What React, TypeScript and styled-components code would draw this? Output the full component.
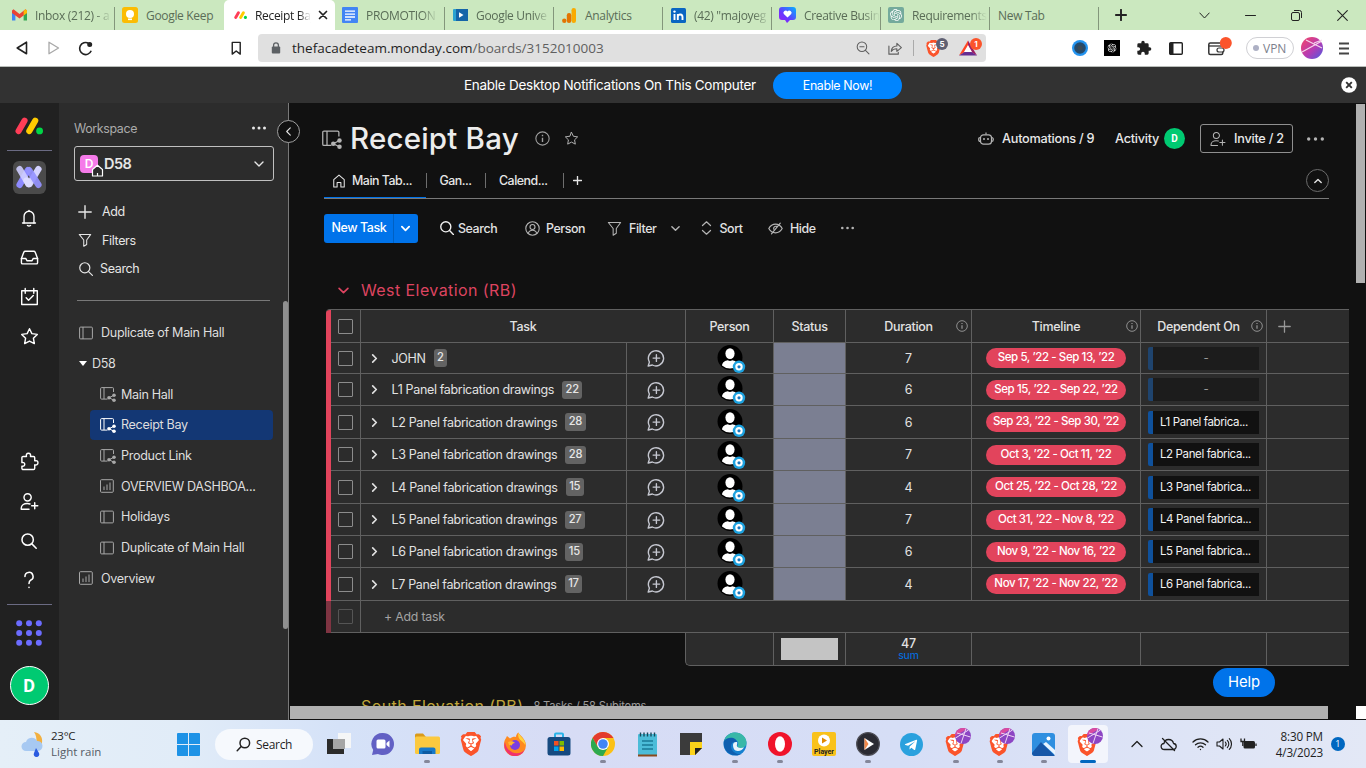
import React from "react";
import styled, { createGlobalStyle, css } from "styled-components";
import { SiBrave, SiOpenai } from "react-icons/si";
import { FaTelegramPlane } from "react-icons/fa";

const ui = '"Inter", "Liberation Sans", sans-serif';
const sys = '"Open Sans", "Noto Sans", sans-serif';

const Global = createGlobalStyle`
  *, *::before, *::after { box-sizing: border-box; }
  body { margin: 0; background: #111; overflow: hidden; }
  svg { display: block; flex: none; }
`;

const Screen = styled.div`
  width: 1366px;
  height: 768px;
  display: flex;
  flex-direction: column;
  overflow: hidden;
  font-family: ${ui};
  font-size: 12.5px;
  color: #e6e6e6;
  white-space: nowrap;
`;

/* ---------- browser chrome ---------- */

const TabStrip = styled.div`
  height: 30px;
  flex: none;
  display: flex;
  background: #cbe8bf;
  font-family: ${sys};
  font-size: 12px;
  letter-spacing: -0.32px;
  color: #5a6d57;
`;

const BrowserTab = styled.div<{ $w: number; $active?: boolean; $sep?: boolean; $pad?: number }>`
  width: ${(p) => p.$w}px;
  height: 30px;
  flex: none;
  display: flex;
  align-items: center;
  padding-left: ${(p) => p.$pad ?? 7}px;
  background: ${(p) => (p.$active ? "#fff" : "transparent")};
  border-radius: ${(p) => (p.$active ? "5px 5px 0 0" : "0")};
  color: ${(p) => (p.$active ? "#222" : "inherit")};
  ${(p) =>
    p.$sep &&
    css`
      background: linear-gradient(#83967b, #83967b) right 7px / 1px 23px no-repeat;
    `}
`;

const TabLabel = styled.span<{ $w: number; $fade?: boolean }>`
  width: ${(p) => p.$w}px;
  margin-left: 8px;
  overflow: hidden;
  ${(p) =>
    p.$fade &&
    css`
      mask-image: linear-gradient(90deg, #000 78%, transparent 100%);
    `}
`;

const WindowButtons = styled.div`
  flex: 1;
  display: flex;
  align-items: center;
  padding-left: 16px;
`;

const Toolbar = styled.div`
  height: 37px;
  flex: none;
  display: flex;
  align-items: center;
  background: #fff;
  border-bottom: 1px solid #b9bdb9;
  padding-left: 15px;
  color: #222;
`;

const NavButtons = styled.div`
  display: flex;
  width: 243px;
  align-items: center;
`;

const UrlField = styled.div`
  width: 728px;
  height: 28px;
  display: flex;
  align-items: center;
  padding: 0 4px 0 13px;
  border-radius: 4px;
  background: #e0e0e0;
  font-family: ${sys};
  font-size: 13.5px;
`;

const UrlText = styled.span`
  flex: 1;
  margin-left: 11px;
  color: #1f1f1f;
  & > span {
    color: #5f5f5f;
  }
`;

const UrlDivider = styled.i`
  width: 1px;
  height: 16px;
  margin: 0 11px 0 10px;
  background: #aaa;
`;

const BadgedIcon = styled.div<{ $w: number }>`
  position: relative;
  width: ${(p) => p.$w}px;
  height: 22px;
  display: flex;
  align-items: center;
`;

const CountBadge = styled.span<{ $c: string }>`
  position: absolute;
  top: 1px;
  right: 0;
  width: 12px;
  height: 12px;
  border-radius: 6px;
  background: ${(p) => p.$c};
  color: #fff;
  font: 700 8px/12px ${ui};
  text-align: center;
`;

const Extensions = styled.div`
  flex: 1;
  display: flex;
  align-items: center;
  padding-left: 86px;
`;

const VpnPill = styled.div`
  width: 48px;
  height: 22px;
  margin-left: 14px;
  border: 1px solid #d0d0d4;
  border-radius: 11px;
  display: flex;
  align-items: center;
  gap: 4px;
  padding-left: 6px;
  font: 12px ${sys};
  color: #7c808c;
  &::before {
    content: "";
    width: 6px;
    height: 6px;
    border-radius: 3px;
    background: #adb0c4;
  }
`;

const Banner = styled.div`
  height: 36px;
  flex: none;
  display: flex;
  align-items: center;
  background: #323232;
  color: #fff;
  padding-left: 464px;
`;

const BannerText = styled.span`
  width: 309px;
  font-size: 13.5px;
  letter-spacing: -0.27px;
`;

const BannerButton = styled.div`
  width: 129px;
  height: 27px;
  border-radius: 14px;
  background: #0085ff;
  font-size: 12.4px;
  letter-spacing: -0.35px;
  line-height: 27px;
  text-align: center;
  margin-right: 439px;
`;

/* ---------- application shell ---------- */

const AppBody = styled.div`
  height: 617px;
  flex: none;
  display: flex;
  background: #111;
`;

const Rail = styled.nav`
  width: 59px;
  flex: none;
  background: #212121;
  display: flex;
  flex-direction: column;
  align-items: center;
  color: #fff;
`;

const RailSlot = styled.div<{ $h: number; $gap?: number }>`
  height: ${(p) => p.$h}px;
  margin-top: ${(p) => p.$gap ?? 0}px;
  padding: 0 1px 1px 0;
  display: flex;
  align-items: center;
  justify-content: center;
`;

const RailRule = styled.i<{ $gap?: number }>`
  width: 45px;
  height: 1px;
  margin-top: ${(p) => p.$gap ?? 0}px;
  background: #6b6b83;
`;

const ProductTile = styled.div`
  width: 33px;
  height: 33px;
  border-radius: 6px;
  background: #4b4b4b;
  display: grid;
  place-items: center;
`;

const RailAvatar = styled.div`
  width: 39px;
  height: 39px;
  border-radius: 50%;
  border: 1px solid #fff;
  background: #00ca72;
  font: 700 18px/37px Roboto, sans-serif;
  text-align: center;
  color: #fff;
`;

const Sidebar = styled.aside`
  position: relative;
  width: 230px;
  flex: none;
  background: #2c2c2c;
  border-right: 1px solid #797979;
`;

const SidebarHead = styled.div`
  height: 43px;
  display: flex;
  align-items: center;
  justify-content: space-between;
  padding: 7px 22px 0 15px;
  color: #ababab;
  font-size: 12.4px;
  letter-spacing: -0.35px;
  & > svg {
    color: #e8e8e8;
  }
`;

const WorkspaceSelect = styled.div`
  width: 200px;
  height: 35px;
  margin-left: 15px;
  border: 1px solid #c0c0c0;
  border-radius: 3px;
  display: flex;
  align-items: center;
  padding: 0 9px 0 5px;
`;

const WorkspaceBadge = styled.div`
  position: relative;
  width: 18px;
  height: 18px;
  border-radius: 4px;
  background: #f57be9;
  color: #fff;
  font-size: 12px;
  font-weight: 600;
  line-height: 18px;
  text-align: center;
  & > svg {
    position: absolute;
    left: 11px;
    top: 9px;
  }
`;

const WorkspaceName = styled.b`
  flex: 1;
  margin-left: 6px;
  font-size: 14.5px;
  font-weight: 600;
  letter-spacing: -0.5px;
`;

const SideActions = styled.div`
  padding: 16.5px 0 0 20px;
`;

const SideAction = styled.div<{ $tx: number }>`
  height: 28.5px;
  display: flex;
  align-items: center;
  font-size: 12.5px;
  letter-spacing: -0.35px;
  & > svg {
    margin-left: -1px;
  }
  & > span {
    margin-left: ${(p) => p.$tx}px;
  }
`;

const SideRule = styled.i`
  display: block;
  width: 193px;
  height: 1px;
  margin: 17px 0 16.5px 18px;
  background: #797979;
`;

const TreeRow = styled.div<{ $level?: number; $active?: boolean }>`
  width: 183px;
  height: 30.7px;
  margin-left: ${(p) => (p.$level ? 31 : 11)}px;
  padding-left: ${(p) => (p.$level ? 10 : 9)}px;
  border-radius: 4px;
  background: ${(p) => (p.$active ? "#133774" : "transparent")};
  display: flex;
  align-items: center;
  color: #dedede;
  font-size: 12.6px;
  letter-spacing: -0.33px;
  & > svg {
    color: ${(p) => (p.$active ? "#fff" : "#a8a8a8")};
  }
`;

const TreeLabel = styled.span<{ $ml: number }>`
  margin-left: ${(p) => p.$ml}px;
`;

const SideScroll = styled.i`
  position: absolute;
  left: 224px;
  top: 198px;
  width: 5px;
  height: 328px;
  border-radius: 3px;
  background: #8f8f8f;
`;

const CollapseKnob = styled.div`
  position: absolute;
  z-index: 2;
  right: -12px;
  top: 17px;
  width: 23px;
  height: 23px;
  border-radius: 50%;
  border: 1px solid #a0a0a0;
  background: #111;
  display: grid;
  place-items: center;
`;

/* ---------- board ---------- */

const Main = styled.main`
  position: relative;
  width: 1077px;
  height: 617px;
  background: #111;
  display: flex;
  flex-direction: column;
`;

const BoardHead = styled.header`
  height: 63px;
  flex: none;
  display: flex;
  align-items: center;
  padding: 8px 0 0 33px;
  color: #b4b4b4;
`;

const BoardTitle = styled.h1`
  width: 185px;
  margin: 0 0 2px 8px;
  font-size: 29.5px;
  font-weight: 500;
  letter-spacing: 0.2px;
  color: #ececec;
`;

const HeadText = styled.span<{ $w: number; $ml?: number }>`
  width: ${(p) => p.$w}px;
  margin-left: ${(p) => p.$ml ?? 0}px;
  font-size: 12.7px;
  font-weight: 500;
  letter-spacing: -0.25px;
  color: #e8e8e8;
`;

const Dot = styled.div`
  width: 21px;
  height: 21px;
  border-radius: 50%;
  background: #00ca72;
  color: #fff;
  font: 700 10px/21px Roboto, sans-serif;
  text-align: center;
`;

const InviteButton = styled.div`
  width: 93px;
  height: 29px;
  margin: 0 14px 0 15px;
  border: 1px solid #8f8f8f;
  border-radius: 3px;
  display: flex;
  align-items: center;
  padding-left: 9px;
`;

const ViewBar = styled.div`
  width: 1005px;
  height: 33px;
  margin-left: 35px;
  flex: none;
  display: flex;
  align-items: center;
  padding-bottom: 3px;
  border-bottom: 1px solid #797979;
  position: relative;
`;

const ViewTab = styled.div<{ $w: number; $pad: number }>`
  width: ${(p) => p.$w}px;
  height: 100%;
  display: flex;
  align-items: center;
  padding-left: ${(p) => p.$pad}px;
  font-size: 12.4px;
  letter-spacing: -0.48px;
  font-weight: 500;
  background: linear-gradient(#6e6e6e, #6e6e6e) right 7px / 1px 15px no-repeat;
  & > svg {
    margin-right: 6px;
  }
`;

const ActiveLine = styled.i`
  position: absolute;
  left: 0;
  bottom: 0;
  width: 102px;
  height: 1px;
  background: #0073ea;
`;

const RoundButton = styled.div`
  width: 23px;
  height: 23px;
  border: 1px solid #6c6c6c;
  border-radius: 50%;
  display: grid;
  place-items: center;
`;

const ActionBar = styled.div`
  height: 58px;
  flex: none;
  display: flex;
  align-items: center;
  padding-left: 35px;
  color: #b4b4b4;
`;

const NewTask = styled.div`
  width: 94px;
  height: 29px;
  border-radius: 3px;
  background: #0073ea;
  color: #fff;
  display: flex;
  align-items: center;
  font-weight: 500;
  letter-spacing: -0.45px;
  & > span {
    width: 70px;
    height: 29px;
    line-height: 28px;
    padding-left: 7.5px;
    border-right: 1px solid #0060c2;
  }
  & > svg {
    margin-left: 7px;
  }
`;

const Action = styled.div<{ $ml: number; $gap: number; $w: number }>`
  width: ${(p) => p.$w}px;
  margin-left: ${(p) => p.$ml}px;
  display: flex;
  align-items: center;
  gap: ${(p) => p.$gap}px;
  & > span {
    font-size: 12.4px;
    font-weight: 500;
    letter-spacing: -0.4px;
    color: #e2e2e2;
  }
`;

const GroupHead = styled.div<{ $c: string }>`
  flex: none;
  display: flex;
  align-items: center;
  height: 30px;
  padding-left: 49px;
  color: ${(p) => p.$c};
  font-size: 16px;
  letter-spacing: 0.42px;
  & > b {
    font-weight: 400;
    margin-left: 12px;
  }
  & > small {
    margin-left: 10px;
    font-size: 11.2px;
    letter-spacing: -0.2px;
    color: #9b9b9b;
  }
`;

const line = "#606060";

const Table = styled.div`
  width: 1023px;
  flex: none;
  margin: 4px 0 0 37px;
  border-top: 1px solid ${line};
  border-top-left-radius: 4px;
  overflow: hidden;
`;

const Row = styled.div<{ $h: number; $faded?: boolean }>`
  height: ${(p) => p.$h}px;
  display: flex;
  background: #2c2c2c;
  border-bottom: 1px solid ${line};
  &::before {
    content: "";
    flex: none;
    width: 5px;
    margin-bottom: -1px;
    background: ${(p) => (p.$faded ? "#7f3442" : "#e2445c")};
  }
`;

const Cell = styled.div<{ $w: number; $last?: boolean; $fill?: string }>`
  width: ${(p) => p.$w}px;
  flex: none;
  display: flex;
  align-items: center;
  justify-content: center;
  border-right: ${(p) => (p.$last ? "0" : `1px solid ${line}`)};
  background: ${(p) => p.$fill ?? "transparent"};
  font-size: 12.5px;
  letter-spacing: -0.2px;
  color: #e2e2e2;
`;

const HeaderCell = styled(Cell)<{ $info?: number }>`
  font-weight: 500;
  letter-spacing: -0.3px;
  position: relative;
  & > svg {
    position: absolute;
    right: ${(p) => p.$info}px;
  }
`;

const Checkbox = styled.i<{ $dim?: boolean }>`
  width: 15px;
  height: 15px;
  border: 1px solid ${(p) => (p.$dim ? "#555" : "#8c8c8c")};
  border-radius: 1px;
`;

const NameCell = styled(Cell)`
  justify-content: flex-start;
  padding-left: 9px;
  letter-spacing: -0.34px;
  & > span {
    margin-left: 12.5px;
  }
`;

const SubCount = styled.b`
  margin-left: 8px;
  height: 18px;
  padding: 0 3.5px;
  border-radius: 3px;
  background: #636363;
  font-size: 11.2px;
  line-height: 16px;
  font-weight: 500;
  letter-spacing: -0.3px;
  color: #e6e6e6;
`;

const DatePill = styled.div`
  width: 140px;
  height: 20px;
  border-radius: 10px;
  background: #e2445c;
  color: #fff;
  font-size: 11.5px;
  font-weight: 500;
  letter-spacing: -0.4px;
  line-height: 19px;
  text-align: center;
`;

const Dependency = styled.div<{ $empty: boolean }>`
  width: 111px;
  height: 23px;
  border-left: 5px solid ${(p) => (p.$empty ? "#1f446e" : "#0f519c")};
  border-radius: 2px 0 0 2px;
  background: ${(p) => (p.$empty ? "#1c1c1c" : "#111")};
  color: ${(p) => (p.$empty ? "#999" : "#f2f2f2")};
  font-size: 11.5px;
  letter-spacing: -0.38px;
  line-height: 23px;
  padding-left: ${(p) => (p.$empty ? 0 : 7)}px;
  text-align: ${(p) => (p.$empty ? "center" : "left")};
`;

const AddTask = styled.span`
  padding-left: 23px;
  align-self: center;
  color: #a3a3a3;
  font-size: 12.3px;
  letter-spacing: -0.2px;
`;

const Summary = styled.div`
  flex: none;
  width: 664px;
  height: 33px;
  margin-left: 396px;
  display: flex;
  background: #2c2c2c;
  border: 1px solid ${line};
  border-top: 0;
  border-right: 0;
  border-bottom-left-radius: 5px;
`;

const StatusBlock = styled.i`
  width: 57px;
  height: 22px;
  background: #c4c4c4;
`;

const SumStack = styled.div`
  display: flex;
  flex-direction: column;
  align-items: center;
  font-size: 12.5px;
  font-weight: 500;
  line-height: 12px;
  & > small {
    font-size: 10.5px;
    font-weight: 400;
    line-height: 11px;
    color: #0073ea;
    letter-spacing: -0.1px;
  }
`;

const NextGroup = styled.div`
  flex: 1;
  padding-top: 25px;
  height: 40px;
  overflow: hidden;
`;

const ScrollTrack = styled.div`
  height: 14px;
  flex: none;
  display: flex;
  justify-content: space-between;
  background: #111;
  padding-left: 1px;
  border-bottom: 1px solid #111;
`;

const ScrollThumb = styled.i<{ $w: number; $c: string }>`
  width: ${(p) => p.$w}px;
  height: 13px;
  background: ${(p) => p.$c};
`;

const VerticalThumb = styled.i`
  position: absolute;
  right: 1px;
  top: 1px;
  width: 9px;
  height: 179px;
  background: #b1b1b1;
`;

const HelpButton = styled.div`
  position: absolute;
  left: 924px;
  top: 565px;
  width: 62px;
  height: 29px;
  border-radius: 15px;
  background: #0073ea;
  color: #fff;
  font-size: 14.8px;
  letter-spacing: -0.1px;
  line-height: 29px;
  text-align: center;
`;

/* ---------- desktop taskbar ---------- */

const Taskbar = styled.footer`
  height: 48px;
  flex: none;
  display: flex;
  align-items: center;
  background: linear-gradient(90deg, #e5eff8 0, #e1ecf8 180px, #d5e2f8 340px, #d7dcf5 560px, #d6def6 900px, #e3e8f6 1366px);
  font-family: ${sys};
  color: #1f1f1f;
`;

const Weather = styled.div`
  width: 166px;
  display: flex;
  align-items: center;
  padding-left: 21px;
  font-size: 11.5px;
  line-height: 16px;
  letter-spacing: -0.25px;
  & > div {
    margin-left: 6px;
  }
  & small {
    display: block;
    font-size: 11.5px;
    color: #555c66;
    letter-spacing: 0;
  }
`;

const TaskSlot = styled.div<{ $open?: boolean; $active?: boolean }>`
  width: 44.05px;
  height: 48px;
  flex: none;
  display: grid;
  place-items: center;
  position: relative;
  isolation: isolate;
  ${(p) =>
    p.$active &&
    css`
      &::before {
        content: "";
        position: absolute;
        z-index: -1;
        inset: 5px 2px;
        border-radius: 4px;
        background: #f3f5fc;
      }
    `}
  ${(p) =>
    (p.$open || p.$active) &&
    css`
      &::after {
        content: "";
        position: absolute;
        bottom: 5px;
        left: calc(50% - ${p.$active ? 8 : 3}px);
        width: ${p.$active ? 16 : 6}px;
        height: 3px;
        border-radius: 2px;
        background: ${p.$active ? "#0067c0" : "#84879a"};
      }
    `}
`;

const SearchPill = styled.div`
  width: 98px;
  height: 31px;
  margin: 0 4px 0 5px;
  border-radius: 16px;
  background: #f6f9fd;
  display: flex;
  align-items: center;
  justify-content: center;
  gap: 5px;
  font-size: 12px;
  letter-spacing: -0.3px;
`;

const Tray = styled.div`
  flex: 1;
  display: flex;
  align-items: center;
  padding-left: 20px;
`;

const Clock = styled.div`
  width: 59px;
  margin-left: 7px;
  margin-right: 8px;
  font-size: 11.7px;
  line-height: 16px;
  letter-spacing: -0.2px;
  text-align: right;
`;

const Notice = styled.div`
  width: 14px;
  height: 14px;
  border-radius: 7px;
  background: #0067c0;
  color: #fff;
  font-size: 9px;
  line-height: 14px;
  text-align: center;
`;

/* ---------- icons ---------- */

type StrokeProps = { w?: number; h?: number; box?: string; sw?: number; color?: string; d: string | string[] };

const Stroke = ({ w = 16, h = w, box = "0 0 20 20", sw = 1.5, color = "currentColor", d }: StrokeProps) => (
  <svg width={w} height={h} viewBox={box} fill="none" stroke={color} strokeWidth={sw} strokeLinecap="round" strokeLinejoin="round">
    {(Array.isArray(d) ? d : [d]).map((p, i) => (
      <path key={i} d={p} />
    ))}
  </svg>
);

const Gap = styled.i<{ $w: number; $h?: number }>`
  width: ${(p) => p.$w}px;
  height: ${(p) => p.$h ?? 0}px;
  flex: none;
`;

const glass = ["M8.5 2.2a6.3 6.3 0 1 0 0 12.6a6.3 6.3 0 1 0 0-12.6Z", "M13.2 13.2L18 18"];
const funnel = "M1.8 2h16.4l-5.8 8v6.4L8.2 19V10Z";
const starPath = "M10 1.8l2.5 5.2 5.7.8-4.1 4 1 5.7-5.1-2.7-5.1 2.7 1-5.7-4.1-4 5.7-.8Z";
const personPlus = ["M8 1.8a3.7 3.7 0 1 0 0 7.6a3.7 3.7 0 1 0 0-7.6Z", "M9.5 18.2H1.3V17c0-2.8 2.8-4.9 6.4-4.9 1.2 0 2 .2 2.8.5", "M15.5 11.3v6.4M12.3 14.5h6.4"];

const Chevron = ({ dir = "down", w = 10, sw = 1.4 }: { dir?: "down" | "up" | "left" | "right"; w?: number; sw?: number }) => {
  const d = { down: "M1 3l4 4 4-4", up: "M1 7l4-4 4 4", left: "M7 1L3 5l4 4", right: "M3 1l4 4-4 4" }[dir];
  return <Stroke w={w} box="0 0 10 10" sw={sw} d={d} />;
};

const Dots = ({ w = 14, r = 1.5 }: { w?: number; r?: number }) => (
  <svg width={w} height="6" viewBox={`0 0 ${w} 6`} fill="currentColor">
    <circle cx={r} cy="3" r={r} />
    <circle cx={w / 2} cy="3" r={r} />
    <circle cx={w - r} cy="3" r={r} />
  </svg>
);

const BoardIcon = ({ size = 14 }: { size?: number }) => (
  <svg width={size} height={size} viewBox="0 0 14 14" fill="none" stroke="currentColor">
    <rect x=".6" y="1.1" width="12.8" height="11.8" rx="1" />
    <path d="M4 1v12" />
  </svg>
);

const SharedBoardIcon = ({ size = 16 }: { size?: number }) => (
  <svg width={size} height={size} viewBox="0 0 16 16" fill="none" stroke="currentColor">
    <path d="M7.5 13.1H1.6a1 1 0 0 1-1-1V2.6a1 1 0 0 1 1-1H12.500a1 1 0 0 1 1 1V6M4 1.500v11.5" />
    <path d="M14 9.200l-5 2.6 5 2.4" />
    <g fill="currentColor" stroke="none">
      <circle cx="14" cy="9.200" r="1.8" />
      <circle cx="9" cy="11.8" r="1.8" />
      <circle cx="14" cy="14.2" r="1.8" />
    </g>
  </svg>
);

const DashIcon = () => (
  <svg width="14" height="14" viewBox="0 0 14 14" fill="none" stroke="currentColor">
    <rect x=".5" y=".7" width="12.8" height="12.6" rx="1" />
    <path d="M4 7.5v3.6M7 5.5v5.6M10 3.5v7.6" />
  </svg>
);

const InfoIcon = ({ size = 12 }: { size?: number }) => (
  <svg width={size} height={size} viewBox="0 0 14 14" fill="none" stroke="#a0a0a0">
    <circle cx="7" cy="7" r="6.2" />
    <path d="M7 6.2v4M7 3.6v1.2" strokeWidth="1.3" />
  </svg>
);

const MondayMark = ({ w = 28 }: { w?: number }) => (
  <svg width={w} height={(w * 18) / 28} viewBox="0 0 28 18" strokeLinecap="round" strokeWidth="6.2">
    <path d="M3.6 14L9.500 3.8" stroke="#ff3d57" />
    <path d="M14.300 14L20.2 3.8" stroke="#ffcb00" />
    <circle cx="24.6" cy="13.9" r="3.4" fill="#00d647" />
  </svg>
);

const ProductMark = () => (
  <svg width="26" height="24" viewBox="0 0 26 24" strokeLinecap="round" strokeWidth="6.4">
    <path d="M3.600 19.800L12 5" stroke="#8d8aff" />
    <path d="M3.600 4.200L12.500 19" stroke="#cfceff" strokeOpacity=".9" />
    <path d="M22.400 4.200L13.500 19" stroke="#d4d3ff" />
    <path d="M13 5L22.400 19.800" stroke="#9592ff" strokeOpacity=".92" />
    <path d="M10.500 15.500l2 3.500" stroke="#dcdbff" />
  </svg>
);

const AppsGrid = () => (
  <svg width="26" height="26" viewBox="0 0 26 26" fill="#6c6cff">
    {[3.2, 13, 22.8].map((y) => [3.2, 13, 22.8].map((x) => <circle key={`${x}-${y}`} cx={x} cy={y} r="3" />))}
  </svg>
);

const ChatPlus = () => (
  <svg width="18" height="18" viewBox="0 0 18 18" fill="none" stroke="#c5c7d0" strokeWidth="1.4" strokeLinecap="round" strokeLinejoin="round">
    <path d="M2.4 13.1A7.6 7.6 0 1 1 5.4 16L1.2 17Z" />
    <path d="M9.4 5.8v6.6M6.1 9.1h6.6" />
  </svg>
);

const PersonAvatar = () => (
  <svg width="29" height="29" viewBox="0 0 29 29">
    <circle cx="13" cy="13.5" r="12.5" fill="#000" />
    <ellipse cx="13" cy="9.6" rx="4.6" ry="5.4" fill="#fff" />
    <path d="M5 21.500c.4-3.600 3.500-5 5.800-5.300 1.400.9 3 .9 4.400 0 2.300.3 5.400 1.700 5.800 5.300a12 12 0 0 1-16 0Z" fill="#fff" />
    <circle cx="22" cy="22.8" r="6.2" fill="#1da2e0" />
    <circle cx="22" cy="22.8" r="3.700" fill="#fff" />
    <circle cx="22" cy="22.8" r="1.600" fill="#1878c0" />
  </svg>
);

const BraveLogo = ({ size = 20, ball }: { size?: number; ball?: boolean }) => {
  const w = size + (ball ? 8 : 0);
  const h = size + (ball ? 8 : 0);
  return (
    <svg width={w} height={h} viewBox={`0 0 ${w} ${h}`} overflow="visible">
      <g transform={ball ? "translate(3 5)" : undefined}>
        <path transform={`scale(${size / 24})`} d="M6 4h12l2 4-2 9-6 5-6-5-2-9Z" fill="#fff" />
        <SiBrave size={size} color="#fb542b" />
      </g>
      {ball && (
        <g transform="translate(22 7)">
          <circle r="8" fill="#8d45c4" />
          <path d="M-8 0A8 8 0 0 1 4-6.900Z" fill="#d94aa0" />
          <path d="M-7.500 2L5.500-6M-6-3L7.500 1M-2 7.500L3-7.500" stroke="#f0d4f4" strokeWidth="1" />
        </g>
      )}
    </svg>
  );
};

const ProfileBall = () => (
  <svg width="22" height="22" viewBox="0 0 22 22">
    <defs>
      <linearGradient id="ball" x1="0" y1="0" x2="1" y2="1">
        <stop offset=".2" stopColor="#e0417f" />
        <stop offset=".55" stopColor="#b63bb4" />
        <stop offset="1" stopColor="#4a5be0" />
      </linearGradient>
    </defs>
    <circle cx="11" cy="11" r="11" fill="url(#ball)" />
    <path d="M1 15L20 4.500M5 3l16 8M13 6L21 3" stroke="#f6d5ec" strokeWidth="1.200" />
  </svg>
);

/* ---------- data ---------- */

const tasks = [
  { name: "JOHN", subs: 2, days: 7, dates: "Sep 5, ’22 - Sep 13, ’22", dep: "", h: 31 },
  { name: "L1 Panel fabrication drawings", subs: 22, days: 6, dates: "Sep 15, ’22 - Sep 22, ’22", dep: "", h: 32 },
  { name: "L2 Panel fabrication drawings", subs: 28, days: 6, dates: "Sep 23, ’22 - Sep 30, ’22", dep: "L1 Panel fabrica...", h: 33 },
  { name: "L3 Panel fabrication drawings", subs: 28, days: 7, dates: "Oct 3, ’22 - Oct 11, ’22", dep: "L2 Panel fabrica...", h: 32 },
  { name: "L4 Panel fabrication drawings", subs: 15, days: 4, dates: "Oct 25, ’22 - Oct 28, ’22", dep: "L3 Panel fabrica...", h: 33 },
  { name: "L5 Panel fabrication drawings", subs: 27, days: 7, dates: "Oct 31, ’22 - Nov 8, ’22", dep: "L4 Panel fabrica...", h: 32 },
  { name: "L6 Panel fabrication drawings", subs: 15, days: 6, dates: "Nov 9, ’22 - Nov 16, ’22", dep: "L5 Panel fabrica...", h: 32 },
  { name: "L7 Panel fabrication drawings", subs: 17, days: 4, dates: "Nov 17, ’22 - Nov 22, ’22", dep: "L6 Panel fabrica...", h: 33 },
];

const tree: { label: string; kind: "board" | "shared" | "dash"; active?: boolean }[] = [
  { label: "Main Hall", kind: "shared" },
  { label: "Receipt Bay", kind: "shared", active: true },
  { label: "Product Link", kind: "shared" },
  { label: "OVERVIEW DASHBOA...", kind: "dash" },
  { label: "Holidays", kind: "board" },
  { label: "Duplicate of Main Hall", kind: "board" },
];

/* ---------- sections ---------- */

const BrowserTabs = () => (
  <TabStrip>
    <BrowserTab $w={115} $sep $pad={12}>
      <svg width="15" height="12" viewBox="0 0 15 12">
        <path d="M0 2v9.500h3.400V4.500Z" fill="#4285f4" />
        <path d="M15 2v9.500h-3.400V4.500Z" fill="#34a853" />
        <path d="M0 1.500L1.500.3 7.500 5 13.500.3 15 1.500V4L7.500 9.500 0 4Z" fill="#ea4335" />
        <path d="M11.600 2L13.500.3 15 1.500V4l-3.400 2.500Z" fill="#fbbc04" />
      </svg>
      <TabLabel $w={77} $fade>Inbox (212) - a</TabLabel>
    </BrowserTab>
    <BrowserTab $w={109}>
      <svg width="16" height="16" viewBox="0 0 16 16">
        <rect width="16" height="16" rx="2.500" fill="#fbbc04" />
        <circle cx="8" cy="7" r="4" fill="#fff" />
        <rect x="6" y="11.500" width="4" height="1.600" fill="#fff" />
      </svg>
      <TabLabel $w={72}>Google Keep</TabLabel>
    </BrowserTab>
    <BrowserTab $w={111} $active $pad={10}>
      <MondayMark w={13} />
      <TabLabel $w={56} $fade>Receipt Bay</TabLabel>
      <Gap $w={7} />
      <Stroke w={10} box="0 0 10 10" sw={1.700} d="M1.500 1.500l7 7M8.500 1.500l-7 7" />
    </BrowserTab>
    <BrowserTab $w={110} $sep>
      <svg width="16" height="16" viewBox="0 0 16 16">
        <rect width="16" height="16" rx="1" fill="#4285f4" />
        <path d="M3 4.200h10M3 7.200h10M3 10h10M3 12.800h6" stroke="#fff" strokeWidth="1.300" />
      </svg>
      <TabLabel $w={72} $fade>PROMOTION</TabLabel>
    </BrowserTab>
    <BrowserTab $w={109} $sep $pad={8}>
      <svg width="15" height="12" viewBox="0 0 15 12">
        <rect width="15" height="12" rx="1" fill="#2aa3d0" />
        <rect x="3" width="12" height="12" fill="#1565a8" />
        <path d="M6 3.200l4.500 2.800L6 8.800Z" fill="#fff" />
      </svg>
      <TabLabel $w={74} $fade>Google Unive</TabLabel>
    </BrowserTab>
    <BrowserTab $w={109} $sep $pad={8}>
      <svg width="15" height="15" viewBox="0 0 15 15">
        <rect x="9.500" y="0" width="4.500" height="15" rx="2.200" fill="#f9ab00" />
        <rect x="4.800" y="5" width="4.500" height="10" rx="2.200" fill="#e37400" />
        <circle cx="2.300" cy="12.700" r="2.200" fill="#e37400" />
      </svg>
      <TabLabel $w={70}>Analytics</TabLabel>
    </BrowserTab>
    <BrowserTab $w={109} $sep $pad={8}>
      <svg width="15" height="15" viewBox="0 0 15 15">
        <rect width="15" height="15" rx="1.500" fill="#0a66c2" />
        <path d="M3.500 6v6M6.800 6v6M6.800 8.500c.5-2.800 4.700-2.800 4.700.5v3" stroke="#fff" strokeWidth="1.900" fill="none" />
        <circle cx="3.500" cy="3.600" r="1.200" fill="#fff" />
      </svg>
      <TabLabel $w={76} $fade>(42) "majoyeg</TabLabel>
    </BrowserTab>
    <BrowserTab $w={109} $sep $pad={7}>
      <svg width="17" height="16" viewBox="0 0 17 16">
        <defs>
          <linearGradient id="cb" x1="1" y1="0" x2="0" y2="1">
            <stop offset="0" stopColor="#00b4ff" />
            <stop offset=".6" stopColor="#6a35ff" />
            <stop offset="1" stopColor="#9a20f0" />
          </linearGradient>
        </defs>
        <path d="M3 0h11a3 3 0 0 1 3 3v7a3 3 0 0 1-3 3h-3l-3 3-2-3H3a3 3 0 0 1-3-3V3a3 3 0 0 1 3-3Z" fill="url(#cb)" />
        <path d="M8.500 10.500L4.800 7a2.200 2.200 0 0 1 3.700-2.500A2.200 2.200 0 0 1 12.200 7Z" fill="#fff" />
      </svg>
      <TabLabel $w={76} $fade>Creative Busin</TabLabel>
    </BrowserTab>
    <BrowserTab $w={109} $sep>
      <svg width="16" height="16" viewBox="0 0 16 16">
        <rect width="16" height="16" rx="2" fill="#74aa9c" />
        <g transform="translate(2 2)">
          <SiOpenai size={12} color="#fff" />
        </g>
      </svg>
      <TabLabel $w={75} $fade>Requirements</TabLabel>
    </BrowserTab>
    <BrowserTab $w={109} $sep $pad={0}>
      <TabLabel $w={72}>New Tab</TabLabel>
    </BrowserTab>
    <WindowButtons>
      <Stroke w={12} box="0 0 12 12" sw={1.900} color="#222" d="M6 .8v10.400M.8 6h10.400" />
      <Gap $w={72} />
      <Stroke w={11} box="0 0 11 11" sw={1} color="#222" d="M.8 3l4.700 5 4.700-5" />
      <Gap $w={35} />
      <Stroke w={11} box="0 0 11 11" sw={1} color="#222" d="M.5 5.500h10" />
      <Gap $w={35} />
      <svg width="11" height="11" viewBox="0 0 11 11" fill="none" stroke="#222">
        <rect x=".5" y="2.500" width="8" height="8" rx="1.500" />
        <path d="M3 .500h5.500a2 2 0 0 1 2 2V8" />
      </svg>
      <Gap $w={35} />
      <Stroke w={11} box="0 0 11 11" sw={1.100} color="#222" d="M.7.7l9.600 9.600M10.300.7L.7 10.300" />
    </WindowButtons>
  </TabStrip>
);

const BrowserToolbar = () => (
  <Toolbar>
    <NavButtons>
      <Stroke w={14} box="0 0 14 14" sw={1.600} d="M11.500 1.200v11.600L2.200 7Z" />
      <Gap $w={18} />
      <Stroke w={14} box="0 0 14 14" sw={1.300} color="#a8a8a8" d="M2 1.200v11.600L11.500 7Z" />
      <Gap $w={17} />
      <svg width="15" height="15" viewBox="0 0 15 15" fill="none" stroke="#222" strokeWidth="1.600">
        <path d="M13.200 9.800A6 6 0 1 1 10.500 2.300" />
        <circle cx="11.700" cy="3.600" r="1.700" fill="#222" />
      </svg>
      <Gap $w={136} />
      <Stroke w={14} box="0 0 14 16" h={15} sw={1.500} d="M3 1.500h8.500v12.500L7.200 10.600 3 14Z" />
    </NavButtons>
    <UrlField>
      <svg width="10" height="12" viewBox="0 0 10 12">
        <rect x=".8" y="4.500" width="8.400" height="7" rx="1" fill="#5c6064" />
        <path d="M2.600 5V3.200a2.400 2.400 0 0 1 4.800 0V5" fill="none" stroke="#5c6064" strokeWidth="1.300" />
      </svg>
      <UrlText>
        thefacadeteam.monday.com<span>/boards/3152010003</span>
      </UrlText>
      <Stroke w={14} color="#5f5f5f" sw={1.500} d={["M8.500 1.500a6.800 6.800 0 1 0 0 13.600a6.800 6.800 0 1 0 0-13.600Z", "M13.500 13.500l5 5M5.500 8.300h6"]} />
      <Gap $w={17} />
      <Stroke w={16} box="0 0 16 16" h={15} color="#5f5f5f" sw={1.200} d={["M1.500 5.500v8.500h10V12", "M4 11c.3-3.500 2.500-5.500 6-5.600V2.500L14.800 7 10 11V8.300c-3 0-4.700.8-6 2.700Z"]} />
      <UrlDivider />
      <BadgedIcon $w={23}>
        <BraveLogo size={17} />
        <CountBadge $c="#5f6073">5</CountBadge>
      </BadgedIcon>
      <Gap $w={11} />
      <BadgedIcon $w={23}>
        <svg width="18" height="16" viewBox="0 0 18 16">
          <path d="M9 .500L0 15.500l5.500-3.300L9 6Z" fill="#ff4724" />
          <path d="M9 .500l9 15-5.500-3.300L9 6Z" fill="#9e1f63" />
          <path d="M0 15.500h18l-5.500-3.600h-7Z" fill="#662d91" />
          <path d="M9 5l4 7H5Z" fill="#fff" />
        </svg>
        <CountBadge $c="#fb542b">1</CountBadge>
      </BadgedIcon>
    </UrlField>
    <Extensions>
      <svg width="16" height="16" viewBox="0 0 16 16">
        <circle cx="8" cy="8" r="8" fill="#2494f0" />
        <circle cx="8" cy="8" r="5.800" fill="#264a6a" />
        <circle cx="8" cy="8" r="2.500" fill="#3c4a55" />
      </svg>
      <Gap $w={16} />
      <svg width="16" height="16" viewBox="0 0 16 16">
        <rect width="16" height="16" />
        <g transform="translate(3.500 3.500)">
          <SiOpenai size={9} color="#fff" />
        </g>
      </svg>
      <Gap $w={16} />
      <svg width="16" height="16" viewBox="0 0 24 24" fill="#222">
        <path d="M20.500 11H19V7a2 2 0 0 0-2-2h-4V3.500a2.500 2.500 0 0 0-5 0V5H4a2 2 0 0 0-2 2v3.800h1.500a2.700 2.700 0 0 1 0 5.400H2V20a2 2 0 0 0 2 2h3.800v-1.500a2.700 2.700 0 0 1 5.400 0V22H17a2 2 0 0 0 2-2v-4h1.500a2.500 2.500 0 0 0 0-5Z" />
      </svg>
      <Gap $w={17} />
      <svg width="14" height="13" viewBox="0 0 14 13" fill="none" stroke="#222" strokeWidth="1.400">
        <rect x=".7" y=".7" width="12.600" height="11.600" rx="1" />
        <rect x="1" y="1" width="3.500" height="11" fill="#222" stroke="none" />
      </svg>
      <Gap $w={25} />
      <svg width="24" height="22" viewBox="0 0 24 22">
        <rect x=".8" y="6" width="14" height="11.500" rx="1.500" fill="none" stroke="#333" strokeWidth="1.500" />
        <path d="M1 9h14" stroke="#333" strokeWidth="1.300" />
        <rect x="9" y="11" width="7" height="4" rx="2" fill="#fff" stroke="#333" strokeWidth="1.200" />
        <circle cx="17.800" cy="6" r="6" fill="#fb542b" />
      </svg>
      <VpnPill>VPN</VpnPill>
      <Gap $w={7} />
      <ProfileBall />
      <Gap $w={16} />
      <svg width="10" height="13" viewBox="0 0 10 13" stroke="#444" strokeWidth="1.800">
        <path d="M0 1.500h10M0 6.500h10M0 11.500h10" />
      </svg>
    </Extensions>
  </Toolbar>
);

const LeftRail = () => (
  <Rail>
    <RailSlot $h={47}><MondayMark /></RailSlot>
    <RailRule />
    <RailSlot $h={33} $gap={10}>
      <ProductTile><ProductMark /></ProductTile>
    </RailSlot>
    <RailSlot $h={40} $gap={4}>
      <Stroke w={18} d={["M2.800 15.500h14.400", "M4.500 15.500V8a5.500 5.500 0 0 1 11 0v7.500", "M10 2.500V1.500M8.300 18.300c1 .7 2.400.7 3.400 0"]} />
    </RailSlot>
    <RailSlot $h={39}>
      <Stroke w={19} d={["M1.500 11L4 4.500C4.300 3.800 4.800 3.500 5.500 3.500h9c.7 0 1.200.3 1.500 1l2.500 6.500v4.500a1.200 1.200 0 0 1-1.200 1.200H2.700a1.200 1.200 0 0 1-1.200-1.200Z", "M1.500 11H6l1.500 2.500h5L14 11h4.500"]} />
    </RailSlot>
    <RailSlot $h={40}>
      <Stroke w={19} d={["M1.800 4h16.400v14.500H1.800Z", "M5.500 1.500v5M14.500 1.500v5", "M6.500 11.300L9 14l5-5"]} />
    </RailSlot>
    <RailSlot $h={40}><Stroke w={19} d={starPath} /></RailSlot>
    <RailSlot $h={40} $gap={85}>
      <Stroke w={19} d="M2 7.300V6a1.300 1.300 0 0 1 1.300-1.300H6.800C6.300 2.800 7 1.300 8.900 1.300S11.500 2.800 11 4.700h3.200A1.300 1.300 0 0 1 15.500 6v3.300c1.900-.5 3.400.2 3.400 2.100s-1.500 2.600-3.400 2.100v3.700a1.300 1.300 0 0 1-1.300 1.300H3.300A1.300 1.300 0 0 1 2 17.200v-2.300c1.900.4 3-.4 3-1.900S3.900 10.700 2 11.100Z" />
    </RailSlot>
    <RailSlot $h={40}><Stroke w={19} d={personPlus} /></RailSlot>
    <RailSlot $h={39}><Stroke w={18} sw={1.700} d={glass} /></RailSlot>
    <RailSlot $h={39}>
      <Stroke w={18} sw={1.700} d={["M5.500 6a4.500 4.500 0 1 1 6.600 4c-1.600.9-2.100 1.600-2.100 3.800", "M10 18v.3"]} />
    </RailSlot>
    <RailRule $gap={4} />
    <RailSlot $h={56}><AppsGrid /></RailSlot>
    <RailSlot $h={50}><RailAvatar>D</RailAvatar></RailSlot>
  </Rail>
);

const WorkspacePanel = () => (
  <Sidebar>
    <SidebarHead>
      Workspace
      <Dots />
    </SidebarHead>
    <WorkspaceSelect>
      <WorkspaceBadge>
        D
        <svg width="13" height="13" viewBox="0 0 13 13" fill="#2c2c2c" stroke="#fff" strokeWidth="1.200" strokeLinejoin="round">
          <path d="M1.500 5.500L6.500 1.200l5 4.300V12H1.500ZM6.500 9v3" />
        </svg>
      </WorkspaceBadge>
      <WorkspaceName>D58</WorkspaceName>
      <Chevron />
    </WorkspaceSelect>
    <SideActions>
      <SideAction $tx={10}>
        <Stroke w={14} box="0 0 14 14" sw={1.400} d="M7 .8v12.400M.8 7h12.400" />
        <span>Add</span>
      </SideAction>
      <SideAction $tx={10}>
        <Stroke w={14} sw={1.500} d={funnel} />
        <span>Filters</span>
      </SideAction>
      <SideAction $tx={6}>
        <Stroke w={16} sw={1.500} d={glass} />
        <span>Search</span>
      </SideAction>
    </SideActions>
    <SideRule />
    <TreeRow>
      <BoardIcon />
      <TreeLabel $ml={8}>Duplicate of Main Hall</TreeLabel>
    </TreeRow>
    <TreeRow>
      <Gap $w={-1} />
      <svg width="8" height="5" viewBox="0 0 8 5"><path d="M0 0h8L4 5Z" fill="#fff" /></svg>
      <TreeLabel $ml={5}>D58</TreeLabel>
    </TreeRow>
    {tree.map((t, i) => (
      <TreeRow key={i} $level={1} $active={t.active}>
        {t.kind === "shared" ? <SharedBoardIcon /> : t.kind === "dash" ? <DashIcon /> : <BoardIcon />}
        <TreeLabel $ml={t.kind === "shared" ? 5 : 7}>{t.label}</TreeLabel>
      </TreeRow>
    ))}
    <TreeRow>
      <DashIcon />
      <TreeLabel $ml={8}>Overview</TreeLabel>
    </TreeRow>
    <SideScroll />
    <CollapseKnob><Chevron dir="left" w={9} sw={1.200} /></CollapseKnob>
  </Sidebar>
);

const BoardHeader = () => (
  <>
    <BoardHead>
      <SharedBoardIcon size={20} />
      <BoardTitle>Receipt Bay</BoardTitle>
      <InfoIcon size={15} />
      <Gap $w={14} />
      <Stroke w={15} sw={1.300} d={starPath} />
      <Gap $w={399} />
      <svg width="16" height="14" viewBox="0 0 16 14" fill="none" stroke="currentColor" strokeWidth="1.200">
        <rect x="2.500" y="2.800" width="11" height="9.400" rx="3" />
        <path d="M8 2.500V.5M2.400 5.500C.9 5.500.7 6 .7 7.500s.2 2 1.700 2M13.600 5.500c1.500 0 1.700.5 1.700 2s-.2 2-1.700 2" />
        <path d="M6 6v2M10 6v2" strokeWidth="1.500" />
      </svg>
      <HeadText $w={113} $ml={8}>Automations / 9</HeadText>
      <HeadText $w={49}>Activity</HeadText>
      <Dot>D</Dot>
      <InviteButton>
        <Stroke w={16} sw={1.300} d={personPlus} />
        <HeadText $w={52} $ml={8}>Invite / 2</HeadText>
      </InviteButton>
      <Dots w={17} r={1.700} />
    </BoardHead>
    <ViewBar>
      <ViewTab $w={103} $pad={8}>
        <Stroke w={14} sw={1.500} d="M2.500 8L10 1.500 17.500 8v10.500h-4.800V12H7.300v6.500H2.500Z" />
        Main Tab...
      </ViewTab>
      <ViewTab $w={59} $pad={12.5}>Gan...</ViewTab>
      <ViewTab $w={78} $pad={13}>Calend...</ViewTab>
      <Gap $w={9} />
      <Stroke w={9} box="0 0 10 10" sw={1.500} d="M5 .5v9M.5 5h9" />
      <Gap $w={724} />
      <RoundButton><Chevron dir="up" w={8} sw={1.700} /></RoundButton>
      <ActiveLine />
    </ViewBar>
    <ActionBar>
      <NewTask>
        <span>New Task</span>
        <Chevron w={9} sw={2} />
      </NewTask>
      <Action $ml={21} $gap={3} $w={86}>
        <Stroke w={16} sw={1.700} color="#f2f2f2" d={glass} />
        <span>Search</span>
      </Action>
      <Action $ml={0} $gap={6} $w={82}>
        <svg width="15" height="15" viewBox="0 0 15 15" fill="none" stroke="currentColor" strokeWidth="1.100">
          <circle cx="7.500" cy="7.500" r="6.700" />
          <circle cx="7.500" cy="6" r="2.500" />
          <path d="M3.300 12.500c.5-2.300 2-3.300 4.200-3.300s3.700 1 4.200 3.300" />
        </svg>
        <span>Person</span>
      </Action>
      <Action $ml={0} $gap={7} $w={94}>
        <Stroke w={15} sw={1.400} d={funnel} />
        <span>Filter</span>
        <Gap $w={-4} />
        <Chevron w={9} sw={1.600} />
      </Action>
      <Action $ml={0} $gap={7.5} $w={67}>
        <Stroke w={11} h={14} box="0 0 11 14" sw={1.200} d={["M1.500 4.500l4-3.700 4 3.700", "M1.500 9.500l4 3.700 4-3.700"]} />
        <span>Sort</span>
      </Action>
      <Action $ml={0} $gap={7} $w={73}>
        <Stroke w={15} h={13} box="0 0 15 13" sw={1.200} d={["M.8 6.500C2.500 3.500 5 2.200 7.500 2.200s5 1.300 6.700 4.300c-1.700 3-4.200 4.300-6.700 4.300S2.500 9.500.8 6.500Z", "M5.800 7.200a2.200 2.200 0 0 1 2.800-2.800", "M3.500 11.800L12.300 1.200"]} />
        <span>Hide</span>
      </Action>
      <Dots w={13} r={1.300} />
    </ActionBar>
  </>
);

const BoardTable = () => (
  <Table>
    <Row $h={33}>
      <HeaderCell $w={30}><Checkbox /></HeaderCell>
      <HeaderCell $w={325}>Task</HeaderCell>
      <HeaderCell $w={88}>Person</HeaderCell>
      <HeaderCell $w={72}>Status</HeaderCell>
      <HeaderCell $w={126} $info={3}>Duration<InfoIcon /></HeaderCell>
      <HeaderCell $w={169} $info={2}>Timeline<InfoIcon /></HeaderCell>
      <HeaderCell $w={126} $info={3}>
        Dependent On
        <Gap $w={10} />
        <InfoIcon />
      </HeaderCell>
      <Cell $w={83} $last>
        <Stroke w={13} box="0 0 13 13" sw={1.300} color="#999" d="M6.500.8v11.400M.8 6.500h11.400" />
        <Gap $w={48} />
      </Cell>
    </Row>
    {tasks.map((t) => (
      <Row key={t.name} $h={t.h}>
        <Cell $w={30}><Checkbox /></Cell>
        <NameCell $w={266}>
          <Chevron dir="right" w={9} sw={1.800} />
          <span>{t.name}</span>
          <SubCount>{t.subs}</SubCount>
        </NameCell>
        <Cell $w={59}><ChatPlus /></Cell>
        <Cell $w={88}><Gap $w={3} /><PersonAvatar /></Cell>
        <Cell $w={72} $fill="#7b7f92" />
        <Cell $w={126}>{t.days}</Cell>
        <Cell $w={169}><DatePill>{t.dates}</DatePill></Cell>
        <Cell $w={126}><Dependency $empty={!t.dep}>{t.dep || "-"}</Dependency></Cell>
        <Cell $w={83} $last />
      </Row>
    ))}
    <Row $h={32} $faded>
      <Cell $w={30}><Checkbox $dim /></Cell>
      <AddTask>+ Add task</AddTask>
    </Row>
  </Table>
);

const Board = () => (
  <Main>
    <BoardHeader />
    <Gap $w={0} $h={18} />
    <GroupHead $c="#dd4460">
      <Chevron w={11} sw={1.500} />
      <b>West Elevation (RB)</b>
    </GroupHead>
    <BoardTable />
    <Summary>
      <Cell $w={88} />
      <Cell $w={72}><StatusBlock /></Cell>
      <Cell $w={126}>
        <SumStack>47<small>sum</small></SumStack>
      </Cell>
      <Cell $w={169} />
      <Cell $w={126} />
    </Summary>
    <NextGroup>
      <GroupHead $c="#c0a63a">
        <Gap $w={11} />
        <b>South Elevation (RB)</b>
        <small>8 Tasks / 58 Subitems</small>
      </GroupHead>
    </NextGroup>
    <ScrollTrack>
      <ScrollThumb $w={1038} $c="#b1b1b1" />
      <ScrollThumb $w={10} $c="#fff" />
    </ScrollTrack>
    <VerticalThumb />
    <HelpButton>Help</HelpButton>
  </Main>
);

const DesktopBar = () => (
  <Taskbar>
    <Weather>
      <svg width="24" height="28" viewBox="0 0 24 28">
        <path d="M13 2c6 1 9 5 8 11-1 5-5 8-10 7 5-4 6-12 2-18Z" fill="#f2b040" />
        <path d="M5 21a4.500 4.500 0 0 1 0-9 6 6 0 0 1 11-1 5 5 0 0 1 1 10Z" fill="#a7c9f2" />
        <path d="M15 18l3 5a2.800 2.800 0 1 1-5 0Z" fill="#2b5be0" />
      </svg>
      <div>23°C<small>Light rain</small></div>
    </Weather>
    <TaskSlot>
      <svg width="23" height="23" viewBox="0 0 23 23" fill="#1d92e6">
        <path d="M1 0h10v11H0V1a1 1 0 0 1 1-1ZM12 0h10a1 1 0 0 1 1 1v10H12ZM0 12h11v11H1a1 1 0 0 1-1-1ZM12 12h11v10a1 1 0 0 1-1 1H12Z" />
      </svg>
    </TaskSlot>
    <SearchPill>
      <svg width="15" height="15" viewBox="0 0 15 15" fill="none" stroke="#222" strokeWidth="1.500" strokeLinecap="round">
        <circle cx="8.800" cy="6" r="4.800" />
        <path d="M5.200 9.600L1.200 13.800" />
      </svg>
      Search
    </SearchPill>
    <TaskSlot>
      <svg width="24" height="22" viewBox="0 0 24 22">
        <rect x="0" y="6" width="17" height="15" fill="#2b2b2b" />
        <rect x="11" y="0" width="13" height="15" fill="#f7f7f7" opacity=".95" />
        <rect x="6" y="6" width="12" height="10" fill="#a6a6a6" />
      </svg>
    </TaskSlot>
    <TaskSlot>
      <svg width="24" height="24" viewBox="0 0 24 24">
        <path d="M12 1a11 11 0 0 1 0 22c-2 0-3.500-.3-5-1L1 23l1.200-5A11 11 0 0 1 12 1Z" fill="#6260c4" />
        <rect x="5.500" y="7.500" width="9" height="9" rx="1.500" fill="#fff" />
        <path d="M15.500 11l3-2.500v7l-3-2.500Z" fill="#fff" />
      </svg>
    </TaskSlot>
    <TaskSlot $open>
      <svg width="25" height="22" viewBox="0 0 25 22">
        <path d="M0 2a1.500 1.500 0 0 1 1.500-1.500H8L11 4v4H0Z" fill="#d99a1c" />
        <rect y="3.500" width="25" height="17.500" rx="1.500" fill="#fbc93f" />
        <path d="M4 21v-4.500a2 2 0 0 1 2-2h12.500a2 2 0 0 1 2 2V21Z" fill="#1779c9" />
        <path d="M7.500 21v-3h9.500v3Z" fill="#0e5ca3" />
      </svg>
    </TaskSlot>
    <TaskSlot><BraveLogo size={24} /></TaskSlot>
    <TaskSlot>
      <svg width="24" height="24" viewBox="0 0 24 24">
        <path d="M3 6l1-2 3 2.500C9 5 11 4.500 13 5c0-2 1-3.500 2.500-4.500C16 3 22.500 6 23 13a11 11 0 0 1-22 .5C.8 11 1.500 8 3 6Z" fill="#ff8a1f" />
        <path d="M2 10a10.500 10.500 0 0 0 20 7c-4 7-18 6-20-7Z" fill="#f0326e" />
        <path d="M15.500.5C16 4 23 7 22.500 14c-1-3-3-4-4-5-3-2-4-5-3-8.500Z" fill="#ffd33d" />
        <circle cx="12" cy="13" r="5" fill="#7a3ee0" />
        <path d="M5 10c3-1 5-1 7 1-2 0-3 1-3 2.500L6 13Z" fill="#ffb52e" />
      </svg>
    </TaskSlot>
    <TaskSlot>
      <svg width="24" height="24" viewBox="0 0 24 24">
        <path d="M8 6V2.500A1 1 0 0 1 9 1.500h6a1 1 0 0 1 1 1V6" fill="none" stroke="#29b3e8" strokeWidth="2" />
        <rect x=".5" y="5" width="23" height="18.500" rx="2.500" fill="#164a80" />
        <path d="M7 9h4.500v4.500H7Z" fill="#f25022" />
        <path d="M12.500 9H17v4.500h-4.500Z" fill="#7fba00" />
        <path d="M7 14.500h4.500V19H7Z" fill="#00a4ef" />
        <path d="M12.500 14.500H17V19h-4.500Z" fill="#ffb900" />
      </svg>
    </TaskSlot>
    <TaskSlot $open>
      <svg width="24" height="24" viewBox="0 0 24 24">
        <circle cx="12" cy="12" r="12" fill="#fbc116" />
        <path d="M1.600 6A12 12 0 0 1 22.400 6H12l-5.200 9Z" fill="#e33b2e" />
        <path d="M1.600 6A12 12 0 0 0 12 24l5.200-9H6.800Z" fill="#2da94f" />
        <circle cx="12" cy="12" r="6" fill="#fff" />
        <circle cx="12" cy="12" r="4.800" fill="#4285f4" />
      </svg>
    </TaskSlot>
    <TaskSlot>
      <svg width="19" height="25" viewBox="0 0 19 25">
        <rect y="2" width="19" height="22" rx="1" fill="#4cbcd8" />
        <path d="M2.500.5v4M6 .5v4M9.500.5v4M13 .5v4M16.500.5v4" stroke="#17495c" strokeWidth="1.400" />
        <path d="M4 9h11M4 13h11M4 17h11" stroke="#1a7a96" strokeWidth="1.700" />
        <path d="M0 23.500h19" stroke="#8a4a1c" strokeWidth="2" />
      </svg>
    </TaskSlot>
    <TaskSlot>
      <svg width="22" height="22" viewBox="0 0 22 22">
        <path d="M0 0h22v15l-7 7H0Z" fill="#3b3b3b" />
        <path d="M10 9h12v6l-7 7h-5Z" fill="#fcd31a" />
        <path d="M15 22v-7h7Z" fill="#222" />
      </svg>
    </TaskSlot>
    <TaskSlot $open>
      <svg width="24" height="24" viewBox="0 0 24 24">
        <circle cx="12" cy="12" r="11.500" fill="#1580d0" />
        <path d="M1 9C3 2 9 .5 12 .5c7 0 11.500 5 11.500 10 0 4-3 5.500-6 5.500-2.500 0-3.500-1-3-2 2-3 0-6.500-4-6.500-4 0-8 1-9.500 1.500Z" fill="#39b8a8" />
        <path d="M1 9c4-5 13-4 13 2-4-3-8 2-5 7 2 3 6 5 10 4C11 26-1 21 1 9Z" fill="#0f5fb0" />
        <path d="M10 13c0-2.500 2-3.500 4-3 .8 2-1 3.500.5 5 1.500 1.200 4.500 1.200 6.500.3-1 2.500-4 4-6.500 3.700-3 0-4.500-3-4.500-6Z" fill="#e8f3fb" />
      </svg>
    </TaskSlot>
    <TaskSlot $open>
      <svg width="24" height="24" viewBox="0 0 24 24">
        <circle cx="12" cy="12" r="12" fill="#f0142b" />
        <ellipse cx="12" cy="12" rx="5" ry="7.800" fill="#fff" />
      </svg>
    </TaskSlot>
    <TaskSlot>
      <svg width="24" height="24" viewBox="0 0 24 24">
        <rect width="24" height="24" rx="2" fill="#f9c21b" />
        <circle cx="12" cy="8.500" r="6" fill="#fff" />
        <path d="M10 5.500l5 3-5 3Z" fill="#e08a00" />
        <text x="12" y="21.500" fontSize="7" fontWeight="700" textAnchor="middle" fontFamily="Roboto" fill="#222">Player</text>
      </svg>
    </TaskSlot>
    <TaskSlot $open>
      <svg width="24" height="24" viewBox="0 0 24 24">
        <circle cx="12" cy="12" r="11.300" fill="#2b2b33" stroke="#4d4d55" strokeWidth="1.300" />
        <path d="M8.500 6l9.500 6-9.500 6Z" fill="#fff" />
        <path d="M8.500 6v12l4-6Z" fill="#f3894a" />
      </svg>
    </TaskSlot>
    <TaskSlot>
      <svg width="23" height="23" viewBox="0 0 23 23">
        <circle cx="11.500" cy="11.500" r="11.500" fill="#2aa1de" />
        <g transform="translate(4 5)"><FaTelegramPlane size={14} color="#fff" /></g>
      </svg>
    </TaskSlot>
    <TaskSlot $open><BraveLogo size={22} ball /></TaskSlot>
    <TaskSlot $open><BraveLogo size={22} ball /></TaskSlot>
    <TaskSlot $open>
      <svg width="23" height="23" viewBox="0 0 23 23">
        <rect width="23" height="23" rx="3" fill="#2f8fe0" />
        <path d="M0 20L9 9l14 14H3a3 3 0 0 1-3-3Z" fill="#1757a8" />
        <path d="M9 9l14 13V17l-9-8-3 2Z" fill="#e8f4ff" />
        <circle cx="16.500" cy="5.500" r="2" fill="#fff" />
      </svg>
    </TaskSlot>
    <TaskSlot $active><BraveLogo size={22} ball /></TaskSlot>
    <Tray>
      <Gap $w={1} />
      <Stroke w={12} box="0 0 12 12" sw={1.300} d="M1 8.500l5-5 5 5" />
      <Gap $w={17} />
      <Stroke w={17} h={15} box="0 0 17 15" sw={1.300} d={["M4.500 12.500h8.300a3 3 0 0 0 .7-6C13 3.800 10.800 2.500 8.500 2.500S4.300 4 4 6.500c-3.800 0-4 6 .5 6Z", "M2.500 1.500l12 12"]} />
      <Gap $w={15} />
      <Stroke w={17} h={14} box="0 0 17 14" sw={1.300} d={["M1 5a10.800 10.800 0 0 1 15 0", "M3.500 7.800a7.200 7.200 0 0 1 10 0", "M6 10.300a3.700 3.700 0 0 1 5 0", "M8.500 12.500v.1"]} />
      <Gap $w={7} />
      <Stroke w={16} h={14} box="0 0 16 14" sw={1.100} d={["M1 5h2.500L7 2v10L3.500 9H1Z", "M9.300 5a3 3 0 0 1 0 4", "M11.300 3.300a5.300 5.300 0 0 1 0 7.400", "M13.300 1.600a7.800 7.800 0 0 1 0 10.800"]} />
      <Gap $w={8} />
      <svg width="17" height="14" viewBox="0 0 17 14">
        <rect x="3.500" y="4" width="11.500" height="7.500" rx="1.500" fill="#222" />
        <path d="M16 6.500v2.500M1 1.500v3h3.500v-3M2.800 4.500V9" stroke="#222" strokeWidth="1.300" fill="none" />
      </svg>
      <Clock>8:30 PM<br />4/3/2023</Clock>
      <Notice>1</Notice>
    </Tray>
  </Taskbar>
);

export default function App() {
  return (
    <>
      <Global />
      <Screen>
        <BrowserTabs />
        <BrowserToolbar />
        <Banner>
          <BannerText>Enable Desktop Notifications On This Computer</BannerText>
          <BannerButton>Enable Now!</BannerButton>
          <svg width="16" height="16" viewBox="0 0 16 16">
            <circle cx="8" cy="8" r="7.800" fill="#fff" />
            <path d="M5.200 5.200l5.600 5.600M10.800 5.200l-5.600 5.600" stroke="#323232" strokeWidth="1.900" />
          </svg>
        </Banner>
        <AppBody>
          <LeftRail />
          <WorkspacePanel />
          <Board />
        </AppBody>
        <DesktopBar />
      </Screen>
    </>
  );
}
